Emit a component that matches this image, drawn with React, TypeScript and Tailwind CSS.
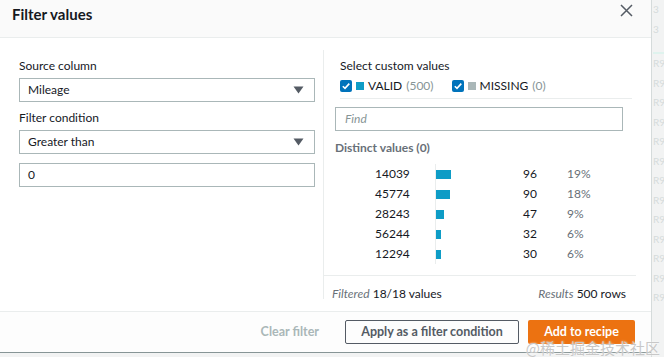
import React from "react"

const rows = [
  { value: "14039", bar: 15, count: 96, pct: "19%" },
  { value: "45774", bar: 14, count: 90, pct: "18%" },
  { value: "28243", bar: 8, count: 47, pct: "9%" },
  { value: "56244", bar: 5, count: 32, pct: "6%" },
  { value: "12294", bar: 5, count: 30, pct: "6%" },
]

const sideRows = ["3", "3", "", "R9", "R9", "R9", "R9", "R9", "R9", "R9", "R9", "R9", "R9", "R9", "R9", "R9"]

const Caret = () => (
  <svg width="11" height="8" viewBox="0 0 11 8">
    <path d="M0.5 0.5 L10.5 0.5 L5.5 7.5 Z" fill="#545b64" />
  </svg>
)

const Checkbox = () => (
  <span className="w-[12px] h-[12px] rounded-[2px] bg-[#0073bb] flex items-center justify-center">
    <svg width="10" height="10" viewBox="0 0 10 10">
      <path d="M1.8 5.2 L4 7.4 L8.3 2.6" stroke="#fff" strokeWidth="1.6" fill="none" />
    </svg>
  </span>
)

const Select = ({ value }: { value: string }) => (
  <div className="h-[24px] border border-[#aab7b8] flex items-center justify-between pl-[8px] pr-[10px] text-[#16191f]">
    <span>{value}</span>
    <Caret />
  </div>
)

export default function App() {
  return (
    <div className="w-[664px] h-[357px] flex bg-[#f2f3f3] overflow-hidden relative font-['Lato',sans-serif] text-[#16191f]">
      <div className="w-[651px] shrink-0 flex flex-col">
        <div className="h-[353px] shrink-0 bg-white border-b border-[#879596] flex flex-col">
          {/* header */}
          <div className="h-[38px] shrink-0 bg-[#fafafa] border-b border-[#eaeded] flex justify-between pl-[12px] pr-[18px]">
            <h1 className="text-[15px] font-bold pt-[4px] leading-[20px]">Filter values</h1>
            <svg width="13" height="13" viewBox="0 0 13 13" className="mt-[4px]">
              <path d="M1 1 L12 12 M12 1 L1 12" stroke="#545b64" strokeWidth="1.5" />
            </svg>
          </div>

          {/* body */}
          <div className="flex-1 flex pt-[12px] pb-[12px]">
            <div className="w-[324px] border-r border-[#eaeded] pl-[19px] pr-[8px] pt-[8px] text-[12px]">
              <div className="leading-[16px]">Source column</div>
              <div className="mt-[4px]">
                <Select value="Mileage" />
              </div>
              <div className="leading-[16px] mt-[8px]">Filter condition</div>
              <div className="mt-[4px]">
                <Select value="Greater than" />
              </div>
              <div className="mt-[9px] h-[24px] border border-[#aab7b8] flex items-center pl-[8px]">0</div>
            </div>

            <div className="w-[312px] flex flex-col text-[12px]">
              <div className="pl-[16px] pr-[4px] pt-[8px]">
                <div className="leading-[16px]">Select custom values</div>
                <div className="flex items-center h-[16px] mt-[4px]">
                  <Checkbox />
                  <span className="w-[8px] h-[8px] bg-[#0e9cc6] ml-[4px]" />
                  <span className="ml-[4px]">VALID</span>
                  <span className="ml-[4px] text-[#879596]">(500)</span>
                  <span className="ml-[18px]">
                    <Checkbox />
                  </span>
                  <span className="w-[8px] h-[8px] bg-[#aab7b8] ml-[4px]" />
                  <span className="ml-[4px]">MISSING</span>
                  <span className="ml-[4px] text-[#879596]">(0)</span>
                </div>
                <div className="mt-[4px] border-t border-[#eaeded]" />
              </div>
              <div className="pl-[11px] pr-[13px] mt-[8px]">
                <div className="h-[24px] border border-[#aab7b8] flex items-center pl-[9px] italic text-[#879596]">Find</div>
                <div className="mt-[9px] leading-[16px] font-bold text-[#687078]">Distinct values (0)</div>
                <div className="mt-[8px] flex flex-col">
                  {rows.map((r) => (
                    <div key={r.value} className="flex h-[20px] items-center">
                      <span className="w-[100px] pl-[40px]">{r.value}</span>
                      <span className="w-[88px] h-full border-l border-[#eaeded] flex items-center">
                        <span className="h-[9px] bg-[#0e9cc6]" style={{ width: r.bar }} />
                      </span>
                      <span className="w-[44px]">{r.count}</span>
                      <span className="text-[#687078]">{r.pct}</span>
                    </div>
                  ))}
                </div>
              </div>
              <div className="mt-auto border-t border-[#eaeded] h-[36px] flex items-center justify-between pl-[8px] pr-[10px] -mb-[12px]">
                <span>
                  <span className="italic text-[#687078]">Filtered</span> 18/18 values
                </span>
                <span>
                  <span className="italic text-[#687078]">Results</span> 500 rows
                </span>
              </div>
            </div>
          </div>

          {/* footer */}
          <div className="h-[41px] shrink-0 border-t border-[#eaeded] bg-[#fdfdfd] flex items-center justify-end pr-[16px] text-[12.5px] font-bold">
            <button className="text-[#aab7b8] pr-[26px]">Clear filter</button>
            <button className="h-[24px] w-[174px] border border-[#545b64] rounded-[2px] text-[#545b64]">Apply as a filter condition</button>
            <button className="h-[24px] w-[107px] ml-[9px] bg-[#ec7211] rounded-[2px] text-white">Add to recipe</button>
          </div>
        </div>
        <div className="flex-1 bg-[#f2f3f3]" />
      </div>

      <div className="flex-1 border-l border-[#d5dbdb] flex flex-col text-[10px] text-[#d5dbdb] leading-[19.5px] pl-[1px]">
        {sideRows.map((t, i) => (
          <span key={i} className={i === 2 ? "border-b-2 border-[#dff3ee] h-[15px]" : ""}>
            {t}
          </span>
        ))}
      </div>

      <div className="absolute right-[4px] bottom-[-2px] text-[15px] text-[#c8c8c8] font-['Noto_Sans_CJK_SC',sans-serif] [text-shadow:0_0_2px_#fff]">
        @稀土掘金技术社区
      </div>
    </div>
  )
}
